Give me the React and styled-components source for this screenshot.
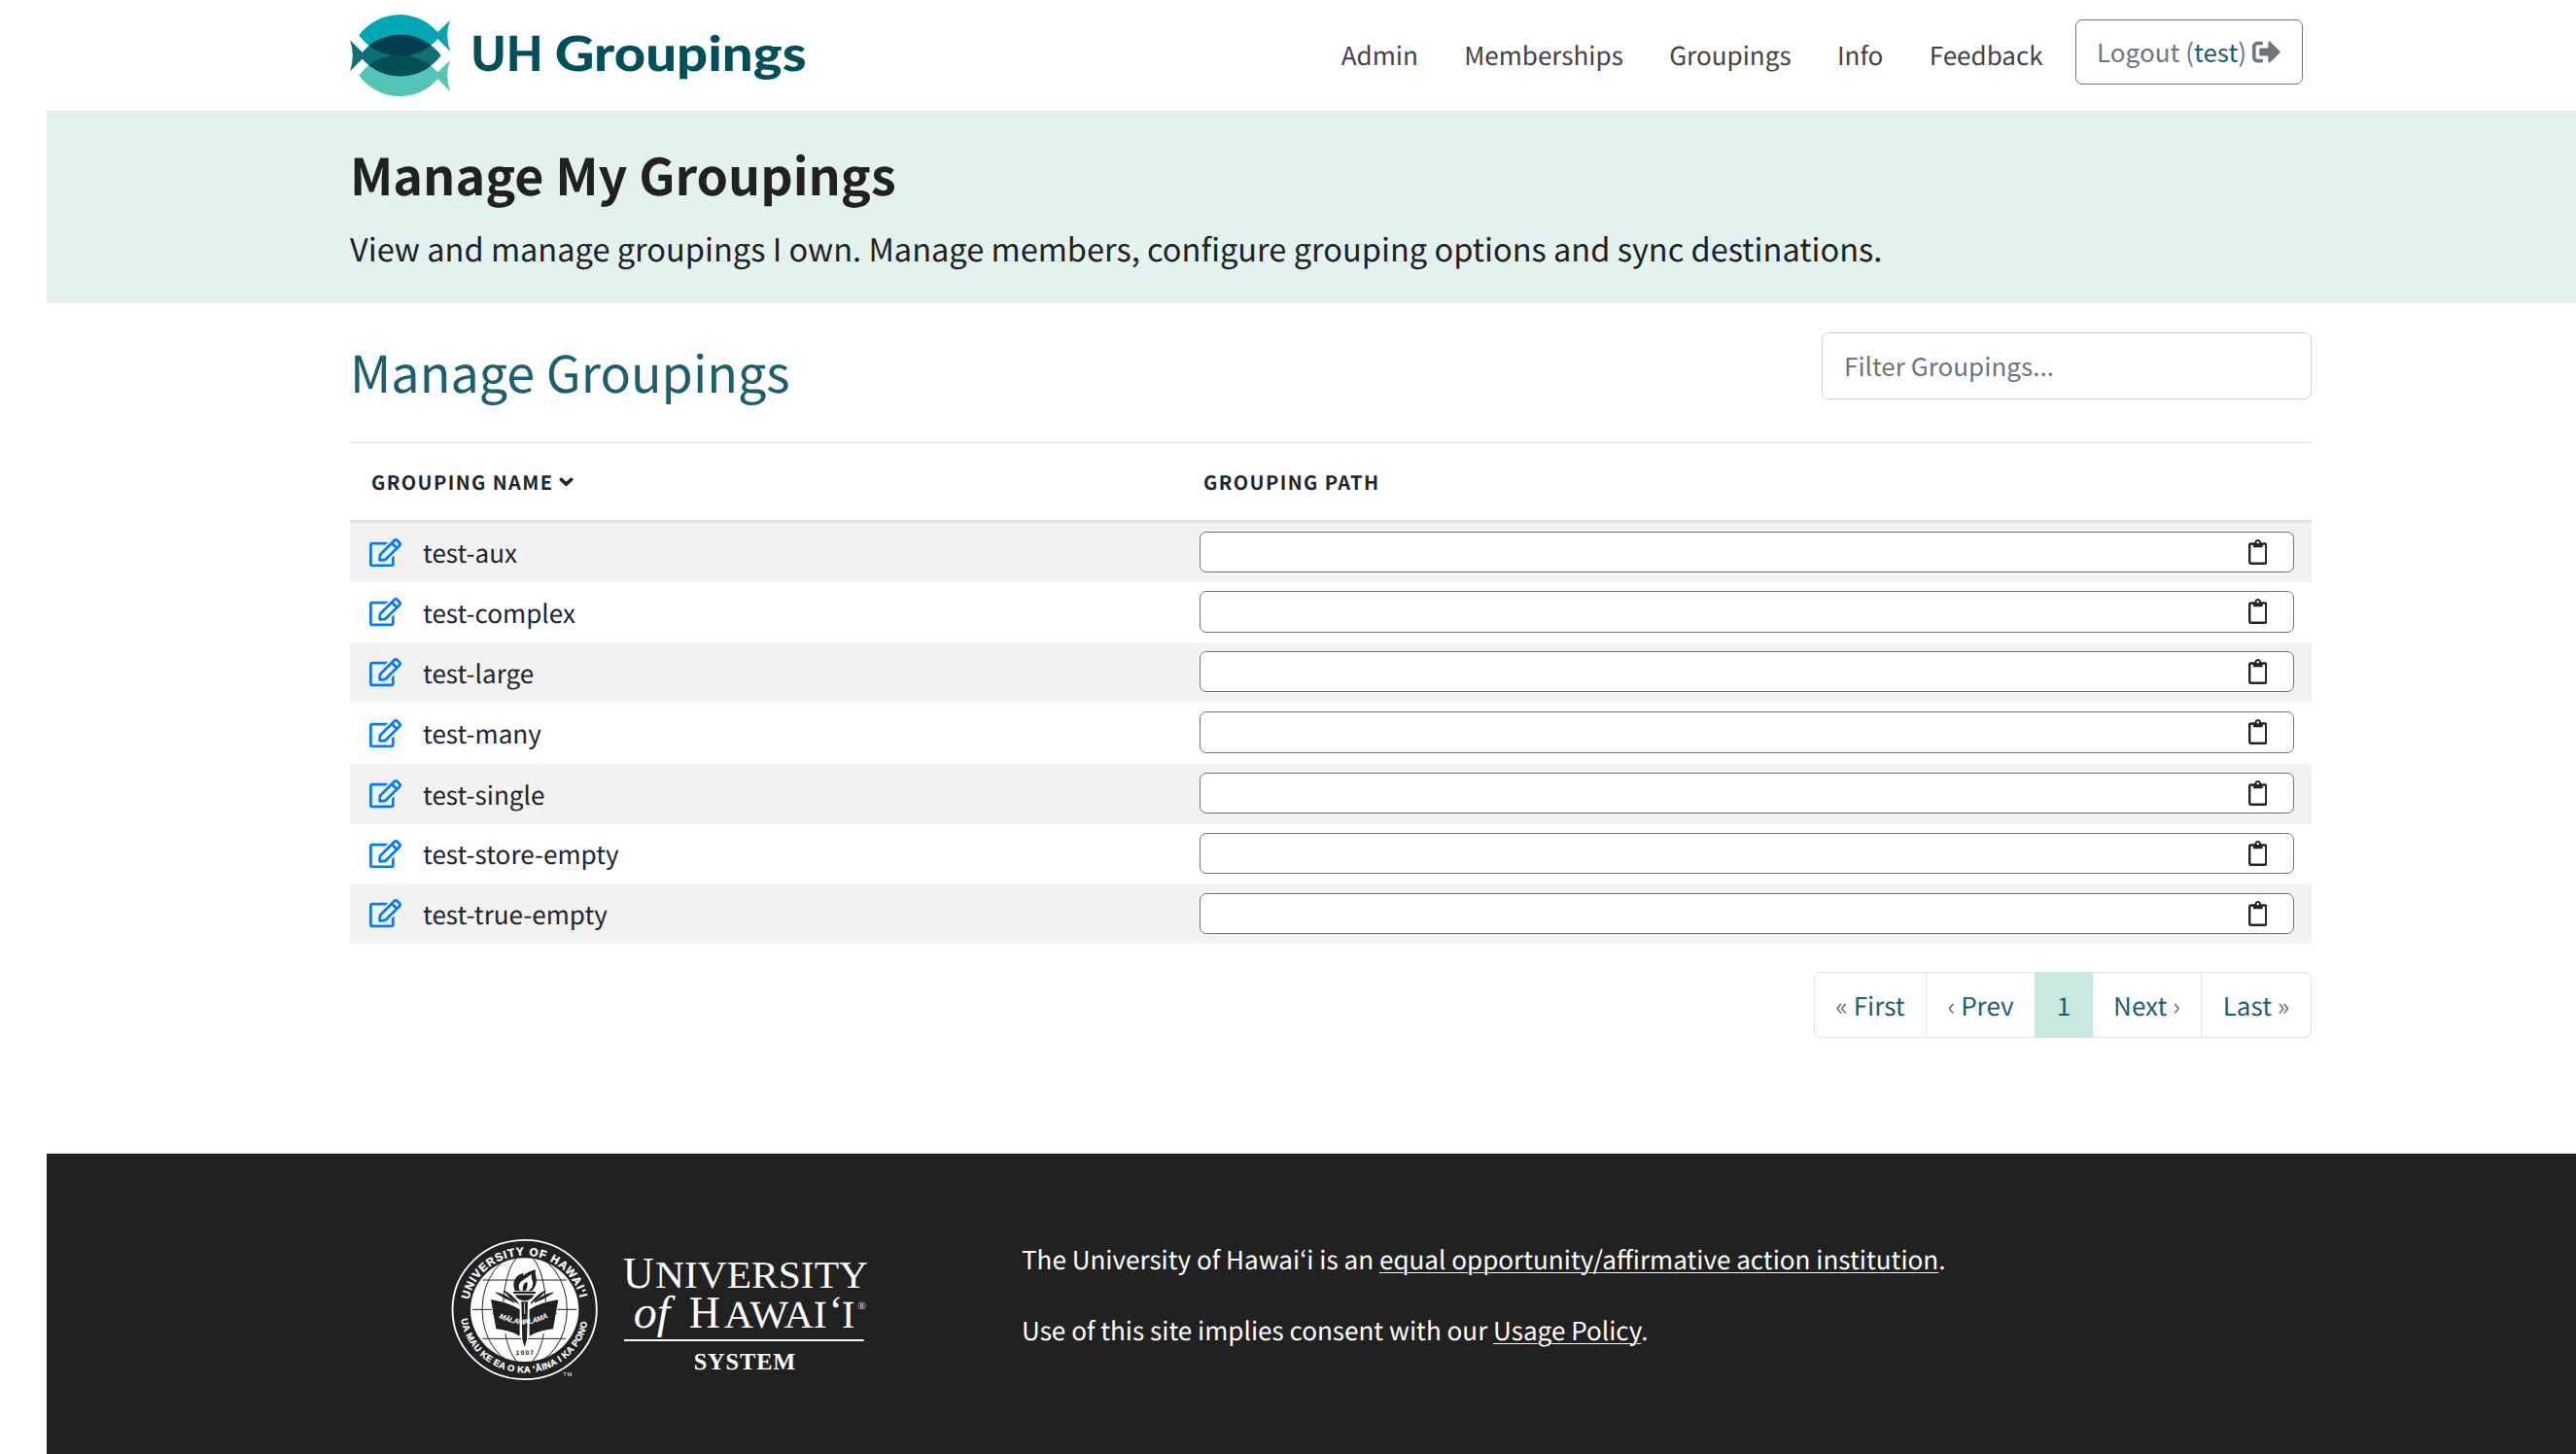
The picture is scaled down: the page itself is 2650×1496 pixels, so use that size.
import React from 'react';
import styled, { createGlobalStyle } from 'styled-components';
import { FaSignOutAlt, FaRegEdit, FaRegClipboard } from 'react-icons/fa';

const GlobalStyle = createGlobalStyle`
  * { box-sizing: border-box; }
  body {
    margin: 0;
    background: #fff;
    color: #212529;
    font-family: "Noto Sans CJK JP", "Noto Sans", sans-serif;
    font-size: 26.05px;
    text-rendering: geometricPrecision;
  }
  h1, h2, p { margin: 0; }
  a { color: inherit; text-decoration: none; }
  svg { display: block; flex: none; }
`;

const Page = styled.div`
  display: flex;
  flex-direction: column;
  min-height: 1496px;
  padding-left: 48px;
`;

const Container = styled.div`
  width: 2018px;
  margin-left: 312px;
`;

const Header = styled.header`
  height: 115px;
  border-bottom: 1px solid #dee2e6;
`;

const HeaderInner = styled(Container)`
  display: flex;
  justify-content: space-between;
  padding-right: 9px;
`;

const Brand = styled.a`
  padding-top: 14px;
`;

const Nav = styled.nav`
  display: flex;
  gap: 47.3px;
  padding-top: 20px;
`;

const NavLink = styled.a`
  line-height: 72px;
  color: #444;
`;

const LogoutButton = styled.button`
  display: flex;
  align-items: center;
  width: 234px;
  height: 67px;
  margin-left: -14px;
  padding: 0 0 1px 21px;
  border: 1px solid #6c757d;
  border-radius: 7px;
  background: #fff;
  color: #6c757d;
  font: inherit;
  white-space: pre;
  svg { margin-left: 6px; }
`;

const UserName = styled.span`
  color: #1c6070;
`;

const Banner = styled.section`
  height: 197px;
  padding-top: 30px;
  background: #e3f2ee;
  color: #212121;
`;

const BannerTitle = styled.h1`
  font-size: 52px;
  font-weight: 700;
  line-height: 68px;
`;

const BannerText = styled.p`
  margin-top: 17px;
  font-size: 32.55px;
  line-height: 52px;
  white-space: nowrap;
`;

const Toolbar = styled.div`
  display: flex;
  justify-content: space-between;
  align-items: flex-start;
  height: 143px;
  padding-top: 30px;
`;

const SectionTitle = styled.h2`
  padding-top: 7px;
  font-size: 52.1px;
  font-weight: 400;
  line-height: 68px;
  color: #1c6070;
`;

const FilterInput = styled.input`
  width: 504px;
  height: 69px;
  padding: 0 22px 1px;
  border: 1px solid #ced4da;
  border-radius: 7px;
  background: #fff;
  font: inherit;
  &::placeholder { color: #6c757d; opacity: 1; }
`;

const Table = styled.div`
  border-top: 1px solid #dee2e6;
`;

const HeadRow = styled.div`
  display: grid;
  grid-template-columns: 856px 1fr;
  align-items: center;
  height: 82px;
  padding-left: 22px;
  border-bottom: 3px solid #dee2e6;
  font-size: 20px;
  font-weight: 700;
  letter-spacing: 1.4px;
  line-height: 30px;
`;

const HeadCell = styled.div`
  display: flex;
  align-items: center;
  gap: 5px;
`;

const Row = styled.div`
  display: grid;
  grid-template-columns: 874px 1126px;
  align-items: start;
  height: ${p => p.$height}px;
  background: ${p => (p.$striped ? '#f2f2f2' : '#fff')};
`;

const NameCell = styled.div`
  display: flex;
  align-items: center;
  gap: 22px;
  height: 100%;
  padding-left: 20px;
  svg { color: #007bff; }
`;

const GroupName = styled.a`
  padding-bottom: 1px;
  line-height: 40px;
`;

const PathBox = styled.div`
  display: flex;
  justify-content: flex-end;
  height: ${p => p.$height}px;
  margin-top: ${p => p.$top}px;
  padding: 7px 27px 0 0;
  border: 1px solid #6c757d;
  border-radius: 7px;
  background: #fff;
`;

const Pagination = styled.nav`
  display: flex;
  width: 512px;
  height: 68px;
  margin: 29px 0 119px auto;
  border-radius: 7px;
  background: #fff;
`;

const PageItem = styled.a`
  width: ${p => p.$width}px;
  border: solid #dee2e6;
  border-width: 1px ${p => (p.$divider ? 1 : 0)}px 1px 0;
  color: #1c6070;
  line-height: 67px;
  text-align: center;
  &:first-child { border-left-width: 1px; border-radius: 7px 0 0 7px; }
  &:last-child { border-right-width: 1px; border-radius: 0 7px 7px 0; }
  ${p => p.$active && 'background: #c8e8e0; border-color: #c8e8e0;'}
`;

const Arrow = styled.span`
  color: #6c757d;
`;

const Footer = styled.footer`
  flex: 1;
  background: #212121;
  color: #fff;
`;

const FooterInner = styled(Container)`
  display: flex;
  padding: 63px 0 0 80px;
`;

const FooterText = styled.div`
  display: flex;
  flex-direction: column;
  gap: 31px;
  margin-left: 131px;
  padding-top: 24px;
  line-height: 42px;
`;

const FooterLink = styled.a`
  text-decoration: underline;
  text-decoration-thickness: 1px;
  text-underline-offset: 3px;
`;

const FISH = 'M88 107 A155.5 155.5 0 0 1 331 97 L369 60 Q352 107 369 156 L331 118 A155.5 155.5 0 0 1 88 107 Z';

function Logo() {
  return (
    <svg width="480" height="86" viewBox="60 40 1440 258">
      <defs>
        <clipPath id="fish-top"><path d={FISH} /></clipPath>
        <clipPath id="fish-bottom"><path d={FISH} transform="translate(0 124)" /></clipPath>
      </defs>
      <path d={FISH} fill="#00a7b5" />
      <path d={FISH} transform="translate(0 124)" fill="#52c5b6" />
      <path d={FISH} transform="translate(429 62) scale(-1 1)" fill="#0f7078" />
      <g clipPath="url(#fish-top)">
        <path d={FISH} transform="translate(429 62) scale(-1 1)" fill="#003f50" />
      </g>
      <g clipPath="url(#fish-bottom)">
        <path d={FISH} transform="translate(429 62) scale(-1 1)" fill="#025053" />
      </g>
      <g fontFamily="Lato, sans-serif" fontWeight="900" fontSize="150" fill="#00505c">
        <text x="433" y="218" textLength="223" lengthAdjust="spacingAndGlyphs">UH</text>
        <text x="692" y="218" textLength="777" lengthAdjust="spacingAndGlyphs">Groupings</text>
      </g>
    </svg>
  );
}

function Seal() {
  const ink = '#212121';
  return (
    <svg width="180" height="190" viewBox="0 0 540 570" fontFamily="Liberation Sans, sans-serif" fill="#fff">
      <defs>
        <path id="seal-upper" d="M127 262 A175 168 0 0 1 471 262" />
        <path id="seal-lower" d="M103.200 322 A198 194 0 0 0 494.800 322" />
        <path id="seal-motto" d="M219 318 Q262 338 299 338 Q336 336 381 312" />
        <clipPath id="seal-disc"><ellipse cx="299" cy="293" rx="167" ry="160" /></clipPath>
      </defs>
      <ellipse cx="299" cy="292.500" rx="222.500" ry="215" fill="none" stroke="#fff" strokeWidth="5.500" />
      <ellipse cx="299" cy="293" rx="167" ry="160" />
      <g clipPath="url(#seal-disc)" fill="none" stroke={ink} strokeWidth="3">
        <ellipse cx="299" cy="292" rx="131" ry="172" />
        <ellipse cx="299" cy="292" rx="66" ry="172" />
        <path d="M170 201H428M138 292H460M170 382H426" />
      </g>
      <path d="M190 256 L290 286 L299 272 L308 286 L408 256 L386 364 L312 372 L299 416 L286 372 L212 364 Z" />
      <path d="M268 408 H330 V436 H268 Z" />
      <path d="M195 262 Q246 268 284 292 V374 Q254 356 211 352 Z M403 262 Q352 268 314 292 V374 Q344 356 387 352 Z" fill={ink} />
      <path d="M200 304 Q258 316 284 336 M398 304 Q340 316 314 336" fill="none" stroke={ink} strokeWidth="3" />
      <path d="M211 240 Q246 248 268 270 Q236 258 211 240 Z M234 234 Q262 246 280 274 Q252 256 234 234 Z M387 240 Q352 248 330 270 Q362 258 387 240 Z M364 234 Q336 246 318 274 Q346 256 364 234 Z" fill={ink} stroke={ink} strokeWidth="3" />
      <path d="M289 268 H309 L306 385 L299 408 L292 385 Z" fill={ink} />
      <path d="M299 272 V306" stroke="#fff" strokeWidth="2.500" />
      <path d="M264 237 H333 V243 H264 Z M270 247 H328 Q322 264 299 265 Q276 264 270 247 Z" fill={ink} />
      <path d="M270 235 Q260 214 270 197 Q278 184 296 180 L295 188 Q306 176 333 169 Q330 180 335 194 Q338 218 322 235 Z" fill={ink} />
      <path d="M284 233 Q276 214 290 204 Q306 194 320 183 Q319 196 324 206 Q328 222 312 233 H302 Q312 220 306 206 Q290 214 294 233 Z" />
      <text fontSize="23" fontWeight="700" fontStyle="italic"><textPath href="#seal-motto" textLength="160">MĀLAMALAMA</textPath></text>
      <text x="272" y="431" fontSize="20" fontWeight="700" fill={ink} textLength="55">1907</text>
      <text fontSize="35" fontWeight="700" stroke="#fff" strokeWidth="1"><textPath href="#seal-upper" textLength="470">UNIVERSITY OF HAWAIʻI</textPath></text>
      <text fontSize="28" fontWeight="700" stroke="#fff" strokeWidth="0.800"><textPath href="#seal-lower" textLength="548">UA MAU KE EA O KA ʻĀINA I KA PONO</textPath></text>
      <text x="418" y="498" fontSize="17" textLength="27">TM</text>
    </svg>
  );
}

function Wordmark() {
  return (
    <svg width="300" height="190" viewBox="60 0 900 570" fontFamily="Liberation Serif, serif" fill="#fff">
      <text x="122" y="226" fontSize="138" textLength="96" lengthAdjust="spacingAndGlyphs">U</text>
      <text x="222" y="226" fontSize="118" textLength="657" lengthAdjust="spacingAndGlyphs">NIVERSITY</text>
      <text x="155" y="348" fontSize="142" fontStyle="italic" textLength="112" lengthAdjust="spacingAndGlyphs">of</text>
      <text x="326" y="348" fontSize="141" textLength="96" lengthAdjust="spacingAndGlyphs">H</text>
      <text x="434" y="348" fontSize="120" textLength="318" lengthAdjust="spacingAndGlyphs">AWAI</text>
      <text x="758" y="338" fontSize="130">ʻ</text>
      <text x="798" y="348" fontSize="120" textLength="36">I</text>
      <text x="847" y="290" fontSize="34">®</text>
      <path d="M126 384H866V390H126Z" />
      <text x="341" y="477" fontSize="73" fontWeight="700" textLength="314">SYSTEM</text>
    </svg>
  );
}

function SortChevron() {
  return (
    <svg width="15" height="10" viewBox="0 0 15 10" fill="none" stroke="currentColor" strokeWidth="3.600" strokeLinecap="round">
      <path d="M2.300 2.300 L7.500 7 L12.700 2.300" />
    </svg>
  );
}

const NAV_LINKS = ['Admin', 'Memberships', 'Groupings', 'Info', 'Feedback'];

const GROUPINGS = [
  { name: 'test-aux', height: 61, boxTop: 9, boxHeight: 42 },
  { name: 'test-complex', height: 62, boxTop: 9, boxHeight: 43 },
  { name: 'test-large', height: 62, boxTop: 9, boxHeight: 42 },
  { name: 'test-many', height: 63, boxTop: 9, boxHeight: 43 },
  { name: 'test-single', height: 62, boxTop: 9, boxHeight: 42 },
  { name: 'test-store-empty', height: 61, boxTop: 9, boxHeight: 42 },
  { name: 'test-true-empty', height: 62, boxTop: 10, boxHeight: 42 },
];

export default function App() {
  return (
    <Page>
      <GlobalStyle />
      <Header>
        <HeaderInner>
          <Brand><Logo /></Brand>
          <Nav>
            {NAV_LINKS.map(label => <NavLink key={label}>{label}</NavLink>)}
            <LogoutButton>
              Logout (<UserName>test</UserName>)
              <FaSignOutAlt size={29} />
            </LogoutButton>
          </Nav>
        </HeaderInner>
      </Header>

      <Banner>
        <Container>
          <BannerTitle>Manage My Groupings</BannerTitle>
          <BannerText>
            View and manage groupings I own. Manage members, configure grouping options and sync destinations.
          </BannerText>
        </Container>
      </Banner>

      <Container>
        <Toolbar>
          <SectionTitle>Manage Groupings</SectionTitle>
          <FilterInput placeholder="Filter Groupings..." />
        </Toolbar>
        <Table>
          <HeadRow>
            <HeadCell>GROUPING NAME <SortChevron /></HeadCell>
            <HeadCell>GROUPING PATH</HeadCell>
          </HeadRow>
          {GROUPINGS.map((g, i) => (
            <Row key={g.name} $height={g.height} $striped={i % 2 === 0}>
              <NameCell>
                <FaRegEdit style={{ width: 33, height: 29.3 }} />
                <GroupName>{g.name}</GroupName>
              </NameCell>
              <PathBox $top={g.boxTop} $height={g.boxHeight}>
                <FaRegClipboard style={{ width: 19.5, height: 26 }} />
              </PathBox>
            </Row>
          ))}
        </Table>
        <Pagination>
          <PageItem $width={116} $divider><Arrow>«</Arrow> First</PageItem>
          <PageItem $width={111}><Arrow>‹</Arrow> Prev</PageItem>
          <PageItem $width={60} $active>1</PageItem>
          <PageItem $width={112} $divider>Next <Arrow>›</Arrow></PageItem>
          <PageItem $width={113}>Last <Arrow>»</Arrow></PageItem>
        </Pagination>
      </Container>

      <Footer>
        <FooterInner>
          <Seal />
          <Wordmark />
          <FooterText>
            <p>The University of Hawaiʻi is an <FooterLink>equal opportunity/affirmative action institution</FooterLink>.</p>
            <p>Use of this site implies consent with our <FooterLink>Usage Policy</FooterLink>.</p>
          </FooterText>
        </FooterInner>
      </Footer>
    </Page>
  );
}
